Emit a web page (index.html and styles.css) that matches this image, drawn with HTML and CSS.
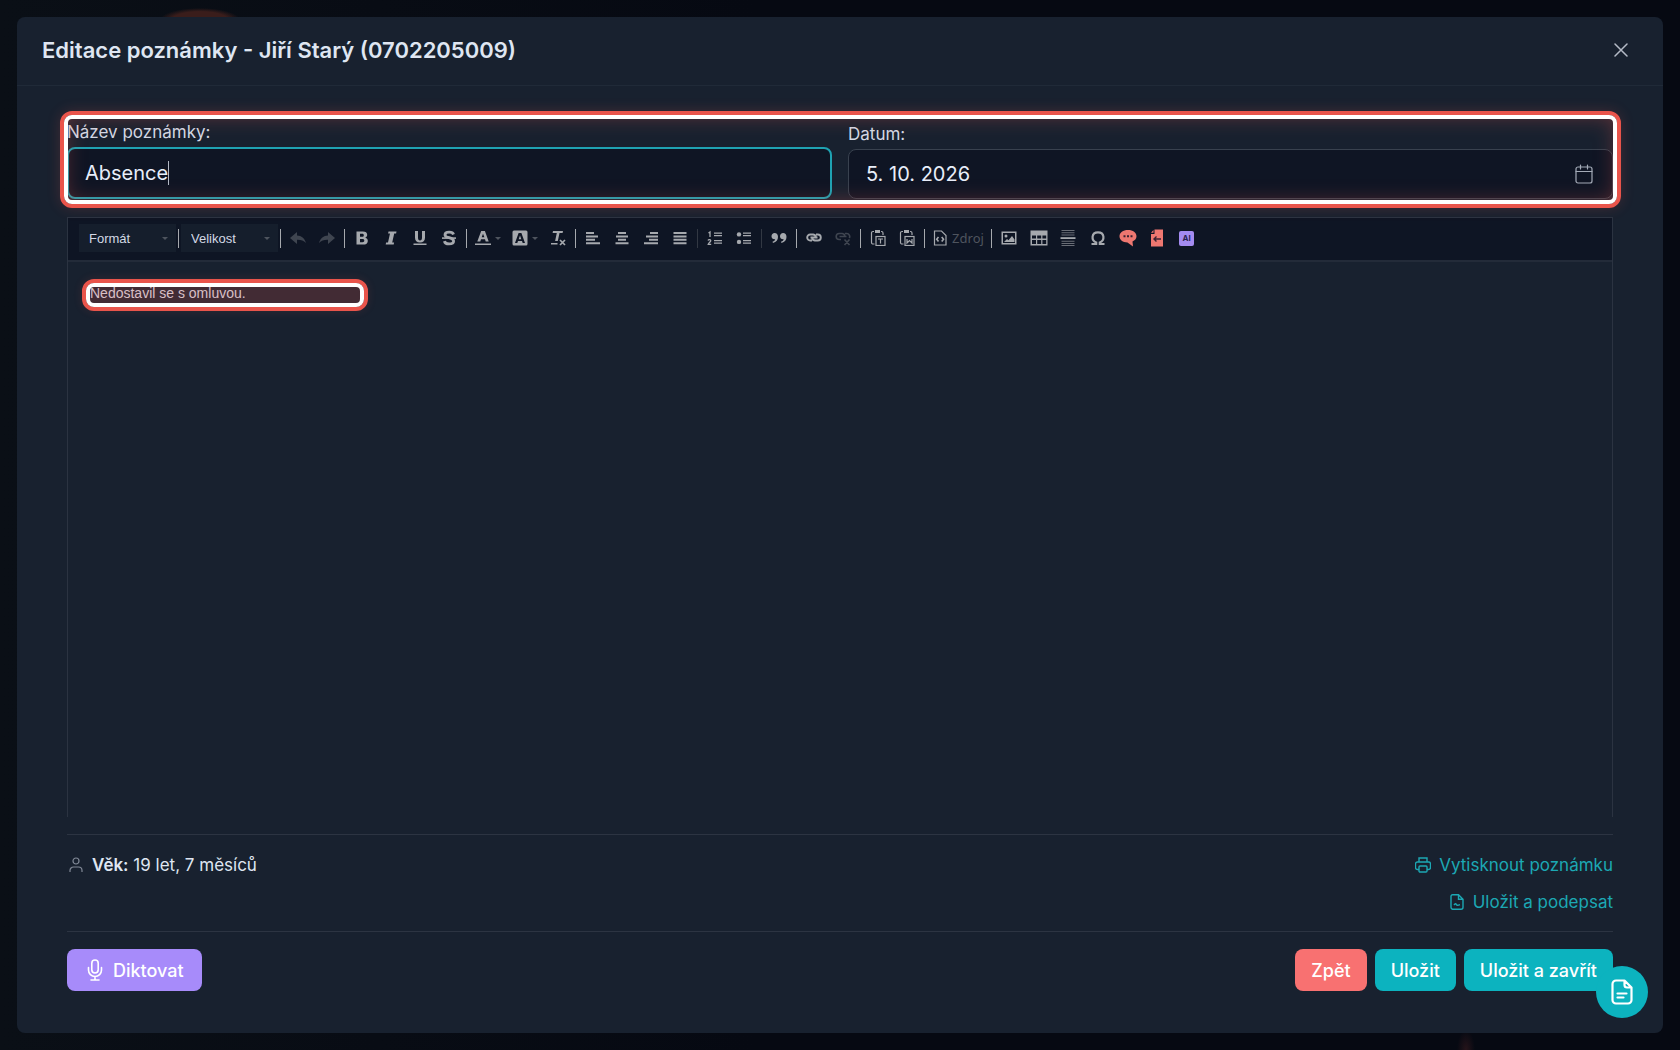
FILE: index.html
```html
<!DOCTYPE html>
<html lang="cs">
<head>
    <meta charset="UTF-8" />
    <meta name="viewport" content="width=device-width, initial-scale=1" />
    <title>Editace poznámky</title>
    <link rel="stylesheet" href="styles.css">
</head>
<body>
    <div class="modal" role="dialog" aria-labelledby="modalTitle">
        <header class="modal-header">
            <h1 id="modalTitle">Editace poznámky - Jiří Starý (0702205009)</h1>
            <button type="button" class="close" aria-label="Zavřít">
                <svg width="14" height="14" viewBox="0 0 14 14"><path d="M1 1l12 12M13 1L1 13" fill="none" stroke="currentColor" stroke-width="1.5" stroke-linecap="round"/></svg>
            </button>
        </header>

        <form class="modal-body" id="noteForm">
            <div class="fields">
                <div class="field">
                    <label for="noteName">Název poznámky:</label>
                    <input type="text" id="noteName" class="focused" value="Absence" />
                    <span class="caret"></span>
                </div>
                <div class="field">
                    <label for="noteDate">Datum:</label>
                    <input type="text" id="noteDate" value="5. 10. 2026" />
                    <button type="button" class="calendar" aria-label="Kalendář">
                        <svg width="18" height="20" viewBox="0 0 18 20" fill="none" stroke="currentColor" stroke-width="1.2" stroke-linecap="round"><rect x="1" y="3" width="16" height="16" rx="2"/><path d="M1 7.5h16M5.5 1v4M12.5 1v4"/></svg>
                    </button>
                </div>
                <div class="highlight highlight-fields"></div>
            </div>

            <div class="editor">
                <div class="toolbar">
                    <div class="combo">
                        <select aria-label="Formát"><option>Formát</option></select>
                        <i class="arrow"></i>
                    </div>
                    <span class="sep"></span>
                    <div class="combo">
                        <select aria-label="Velikost"><option>Velikost</option></select>
                        <i class="arrow"></i>
                    </div>
                    <span class="sep"></span>
                    <div class="group two">
                        <button type="button" class="off" aria-label="Zpět"><svg viewBox="0 0 16 16"><path d="M0 8l7-6v3.500c4.500.2 7.500 2.500 9 7.500-2.500-2.600-5-3.300-9-3.200V14z"/></svg></button>
                        <button type="button" class="off" aria-label="Znovu"><svg viewBox="0 0 16 16"><path d="M16 8L9 2v3.500C4.500 5.700 1.500 8 0 13c2.500-2.600 5-3.300 9-3.200V14z"/></svg></button>
                    </div>
                    <span class="sep"></span>
                    <div class="group four">
                        <button type="button" aria-label="Tučné"><svg viewBox="0 0 16 16"><path fill-rule="evenodd" d="M2.500 1.500h6.300c2.900 0 4.400 1.200 4.400 3.300 0 1.400-.7 2.400-2 2.900 1.700.4 2.600 1.500 2.600 3.200 0 2.400-1.600 3.600-4.800 3.600H2.500zM6 3.800v3h2.100c1.200 0 1.700-.5 1.700-1.500s-.5-1.500-1.700-1.500zM6 9v3.200h2.500c1.200 0 1.800-.5 1.800-1.600S9.700 9 8.500 9z"/></svg></button>
                        <button type="button" aria-label="Kurzíva"><svg viewBox="0 0 16 16"><path d="M5.500 1.500h8l-.4 2h-1.900L9.200 12.500h1.900l-.4 2h-8l.4-2H5l2-9H5.100z"/></svg></button>
                        <button type="button" aria-label="Podtržené"><svg viewBox="0 0 16 16"><path d="M3 1h3v6.500c0 2 .6 2.900 2 2.900s2-.9 2-2.900V1h3v6.700c0 3.100-1.800 4.700-5 4.700S3 10.800 3 7.700zM1.500 13.600h13V15h-13z"/></svg></button>
                        <button type="button" aria-label="Přeškrtnuté"><svg viewBox="0 0 16 16"><path d="M12.500 4.500C12 2.800 10.500 2.200 8.200 2.200c-2.700 0-4.200 1-4.200 2.700C4 8.400 12.600 7 12.600 11c0 1.800-1.600 2.900-4.500 2.900-2.500 0-4.300-.9-4.700-2.800" fill="none" stroke="currentColor" stroke-width="2.800"/><path d="M1 7.300h14v1.600H1z"/></svg></button>
                    </div>
                    <span class="sep"></span>
                    <div class="group colors">
                        <button type="button" class="drop" aria-label="Barva textu"><svg viewBox="0 0 16 16"><path fill-rule="evenodd" d="M6.200 1h3.700l3.800 10.400h-3l-.7-2.200H6l-.7 2.200h-3zM8 3.700L6.700 7.300h2.700zM0 13.400h16V15H0z"/></svg><i class="arrow"></i></button>
                        <button type="button" class="drop" aria-label="Barva pozadí"><svg viewBox="0 0 16 16"><path fill-rule="evenodd" d="M2 .5h12A1.500 1.500 0 0 1 15.500 2v12a1.500 1.500 0 0 1-1.500 1.500H2A1.500 1.500 0 0 1 .5 14V2A1.500 1.500 0 0 1 2 .5zM6.600 3L3 13h2.300l.7-2h4l.7 2H13L9.400 3zM8 5.400l1.300 3.800H6.700z"/></svg><i class="arrow"></i></button>
                        <button type="button" aria-label="Odstranit formátování"><svg viewBox="0 0 16 16"><path d="M3 1h10l-.4 2H9.500L7.800 11H5.100l1.700-8H2.600zM1 13h6.500v1.500H1z"/><path d="M10 10l5 5M15 10l-5 5" fill="none" stroke="currentColor" stroke-width="1.7"/></svg></button>
                    </div>
                    <span class="sep"></span>
                    <div class="group four">
                        <button type="button" aria-label="Vlevo"><svg viewBox="0 0 16 16"><path d="M1 2h8v2H1zM1 5.400h12v2H1zM1 8.800h9v2H1zM1 12.200h14v2H1z"/></svg></button>
                        <button type="button" aria-label="Na střed"><svg viewBox="0 0 16 16"><path d="M4 2h8v2H4zM2 5.400h12v2H2zM4 8.800h8v2H4zM1.500 12.200h13v2h-13z"/></svg></button>
                        <button type="button" aria-label="Vpravo"><svg viewBox="0 0 16 16"><path d="M7 2h8v2H7zM3 5.400h12v2H3zM6 8.800h9v2H6zM1 12.200h14v2H1z"/></svg></button>
                        <button type="button" aria-label="Do bloku"><svg viewBox="0 0 16 16"><path d="M1.500 2h13v2h-13zM1.500 5.400h13v2h-13zM1.500 8.800h13v2h-13zM1.500 12.200h13v2h-13z"/></svg></button>
                    </div>
                    <span class="sep faint"></span>
                    <div class="group two">
                        <button type="button" aria-label="Číslování"><svg viewBox="0 0 16 16"><path d="M7 2.500h8v1.300H7zM7 5h8v1.300H7zM7 10h8v1.300H7zM7 12.500h8v1.300H7z"/><path d="M1.500 3L3 2v5M1 10.500c.5-1.200 3-1 2.700.3C3.500 12 1.500 13 1.200 14.300h3" fill="none" stroke="currentColor" stroke-width="1.300"/></svg></button>
                        <button type="button" aria-label="Odrážky"><svg viewBox="0 0 16 16"><circle cx="3" cy="4.400" r="2.200"/><circle cx="3" cy="11.900" r="2.200"/><path d="M7 2.500h8v1.300H7zM7 5h8v1.300H7zM7 10h8v1.300H7zM7 12.500h8v1.300H7z"/></svg></button>
                    </div>
                    <span class="sep faint"></span>
                    <div class="group one">
                        <button type="button" aria-label="Citace"><svg viewBox="0 0 16 16"><path d="M3.600 3C5.600 3 7 4.500 7 6.800c0 3.200-1.600 5.200-5 6.200l-.5-1.200C3.200 11 4 10.200 4.200 9.200 2 9.500.5 8 .5 6.200.5 4.300 1.800 3 3.600 3zM12.100 3c2 0 3.400 1.500 3.400 3.800 0 3.200-1.600 5.200-5 6.200l-.5-1.200c1.700-.8 2.500-1.600 2.700-2.600C10.500 9.500 9 8 9 6.200 9 4.300 10.300 3 12.100 3z"/></svg></button>
                    </div>
                    <span class="sep"></span>
                    <div class="group two">
                        <button type="button" aria-label="Odkaz"><svg viewBox="0 0 16 16" class="line"><path d="M6 10.500H4.200a3 3 0 0 1 0-6h3a3 3 0 0 1 2.600 3.200M10 4.500h1.800a3 3 0 0 1 0 6h-3a3 3 0 0 1-2.600-3.200M4.500 7.500h7" stroke-width="1.900"/></svg></button>
                        <button type="button" class="off" aria-label="Odstranit odkaz"><svg viewBox="0 0 16 16" class="line"><path d="M6 9.500H4.200a3 3 0 0 1 0-6h3a3 3 0 0 1 2.600 3.200M10 3.500h1.800a3 3 0 0 1 2.500 4.500M4.500 6.500h7M9.500 9.500l5 5.500M14.500 9.500l-5 5.500" stroke-width="1.600"/></svg></button>
                    </div>
                    <span class="sep"></span>
                    <div class="group two">
                        <button type="button" aria-label="Vložit text"><svg viewBox="0 0 16 16" class="line"><path d="M4.500 14H3a1.500 1.500 0 0 1-1.500-1.500V3A1.500 1.500 0 0 1 3 1.500h1M11 1.500h.5A1.500 1.500 0 0 1 13 3v2"/><path d="M5 0h5v3H5z" fill="currentColor" stroke="none"/><rect x="6" y="6.500" width="9" height="9"/><path d="M8 9h5M10.500 9v4.500"/></svg></button>
                        <button type="button" aria-label="Vložit z Wordu"><svg viewBox="0 0 16 16" class="line"><path d="M4.500 14H3a1.500 1.500 0 0 1-1.500-1.500V3A1.500 1.500 0 0 1 3 1.500h1M11 1.500h.5A1.500 1.500 0 0 1 13 3v2"/><path d="M5 0h5v3H5z" fill="currentColor" stroke="none"/><rect x="6" y="6.500" width="9" height="9"/><path d="M8 9v4l2.500-2.500L13 13V9"/></svg></button>
                    </div>
                    <span class="sep"></span>
                    <div class="group source">
                        <button type="button"><svg viewBox="0 0 16 16" class="line"><path d="M3.500 1h6L14 5.500V15H2.500V1z"/><path d="M6.500 7L4.700 9.200l1.800 2.200M9.700 7l1.800 2.200-1.800 2.200" stroke-width="1.600"/></svg><span>Zdroj</span></button>
                    </div>
                    <span class="sep"></span>
                    <div class="group seven">
                        <button type="button" aria-label="Obrázek"><svg viewBox="0 0 16 16"><path fill-rule="evenodd" d="M.5 1.500h15v13H.5zM2 3v10h12V3z"/><circle cx="5" cy="6" r="1.500"/><path d="M3 12l3-3 1.500 1.200L11 6l2.500 3.500V12z"/></svg></button>
                        <button type="button" aria-label="Tabulka"><svg class="wide" viewBox="0 0 18 16"><path fill-rule="evenodd" d="M.5.500h17v15H.5zM2 5.500v3h4v-3zM7.200 5.500v3h4v-3zM12.400 5.500v3h3.800v-3zM2 10v4h4v-4zM7.200 10v4h4v-4zM12.400 10v4h3.800v-4z"/></svg></button>
                        <button type="button" aria-label="Konec stránky"><svg viewBox="0 0 16 16"><path d="M.5 7.200h15v1.800H.5z"/><path d="M1.500 0h13v1h-13zM1.500 2.200h13v1h-13zM1.500 4.400h13v1h-13zM1.500 10.800h13v1h-13zM1.500 13h13v1h-13zM1.500 15h13v1h-13z" opacity=".6"/></svg></button>
                        <button type="button" aria-label="Speciální znak"><svg viewBox="0 0 16 16" class="line"><path d="M1.500 14h4.700v-1.500C1 10.500 1.200 2.300 8 2.300s7 8.200 1.800 10.200V14h4.700" stroke-width="2.200"/></svg></button>
                        <button type="button" class="red" aria-label="Komentář"><svg class="wide" viewBox="0 0 18 18"><path d="M9 1c5 0 8.500 2.700 8.500 6.200 0 2.300-1.700 4.300-4 5.300L14 17.500 8.500 13.400C3.800 13.400.5 10.700.5 7.200S4 1 9 1z"/><path d="M4.500 6.300h2v2h-2zM8 6.300h2v2H8zM11.500 6.300h2v2h-2z" fill="#3b2230"/></svg></button>
                        <button type="button" class="red" aria-label="Vložit dokument"><svg class="wide" viewBox="0 0 18 18"><path d="M6.500.5H15v17H3V5h3.500z"/><path d="M3 3.800L5.500 1v2.800z"/><path d="M6 10h7M8.500 7.500L6 10l2.500 2.500" fill="none" stroke="#3b2230" stroke-width="1.400"/></svg></button>
                        <button type="button" class="ai" aria-label="AI">AI</button>
                    </div>
                </div>
                <div class="content" contenteditable="true" role="textbox" aria-label="Text poznámky">
                    <p>Nedostavil se s omluvou.</p>
                    <div class="highlight highlight-text"></div>
                </div>
            </div>

            <div class="info">
                <p class="age">
                    <svg width="14" height="16" viewBox="0 0 14 16" class="line"><circle cx="7" cy="4" r="3"/><path d="M1 15v-1.500a3.500 3.500 0 0 1 3.500-3.500h5a3.500 3.500 0 0 1 3.500 3.500V15"/></svg>
                    <span><b>Věk:</b> 19 let, 7 měsíců</span>
                </p>
                <div class="links">
                    <a href="#tisk"><svg width="16" height="16" viewBox="0 0 16 16" class="line"><path d="M4 5V1h8v4M4 12.500H2.500a2 2 0 0 1-2-2V7a2 2 0 0 1 2-2h11a2 2 0 0 1 2 2v3.500a2 2 0 0 1-2 2H12" stroke-width="1.400"/><rect x="4" y="9" width="8" height="6" rx="1" stroke-width="1.400"/></svg>Vytisknout poznámku</a>
                    <a href="#podpis"><svg width="16" height="16" viewBox="0 0 16 16" class="line"><path d="M3.500.7h6l4.500 4.500v8a2 2 0 0 1-2 2H3.500a2 2 0 0 1-1.500-2v-11a1.500 1.500 0 0 1 1.500-1.500zM9.500.7v4.500H14M5 11c1.500-2.200 2-1 2.500-.2s1.500.7 3.500-.2" stroke-width="1.400"/></svg>Uložit a podepsat</a>
                </div>
            </div>

            <div class="actions">
                <button type="button" class="btn purple"><svg width="16" height="22" viewBox="0 0 16 22" fill="none" stroke="currentColor" stroke-width="1.600" stroke-linecap="round"><rect x="4.800" y="1" width="6.400" height="13" rx="3.200"/><path d="M1.500 8.500V11a6.500 6.500 0 0 0 13 0V8.500M8 17.500V21M4 21h8"/></svg>Diktovat</button>
                <div class="right">
                    <button type="button" class="btn coral">Zpět</button>
                    <button type="submit" class="btn teal">Uložit</button>
                    <button type="submit" class="btn teal">Uložit a zavřít</button>
                </div>
            </div>
        </form>
    </div>

    <button type="button" class="fab" aria-label="Poznámky">
        <svg width="22" height="26" viewBox="0 0 22 26" fill="none" stroke="currentColor" stroke-width="2.200" stroke-linecap="round" stroke-linejoin="round"><path d="M5 1.500h8.500l7 7V21a3.500 3.500 0 0 1-3.500 3.500H5A3.500 3.500 0 0 1 1.500 21V5A3.500 3.500 0 0 1 5 1.500zM13.500 1.500V6A2.500 2.500 0 0 0 16 8.500h4.500M6.500 14.500h9M6.500 18.500h6"/></svg>
    </button>
</body>
</html>
```
FILE: styles.css
```css
* {
    box-sizing: border-box;
}
body {
    margin: 0;
    height: 100vh;
    padding: 17px;
    font-family: Inter, sans-serif;
    font-size: 17px;
    color: #dfe6f2;
    background:
        radial-gradient(ellipse 40px 12px at 200px 20px, #3a1d1b 70%, transparent),
        radial-gradient(ellipse 9px 20px at 1466px 100%, #26141a, transparent),
        linear-gradient(90deg, #0a0f16, #060912 45%, #060912);
}
h1, p {
    margin: 0;
}
button {
    padding: 0;
    border: none;
    background: none;
    color: inherit;
    font-family: inherit;
    cursor: pointer;
}
.line {
    fill: none;
    stroke: currentColor;
    stroke-width: 1.2;
}
.modal {
    display: flex;
    flex-direction: column;
    height: 100%;
    border-radius: 8px;
    background: #18212f;
}
.modal-header {
    display: flex;
    align-items: center;
    justify-content: space-between;
    height: 69px;
    padding: 0 35px 2px 25px;
    border-bottom: 1px solid #202a38;
}
.modal-header h1 {
    font-size: 22px;
    line-height: 32px;
    font-weight: 600;
}
.close {
    display: flex;
    color: #b4bac6;
}
.modal-body {
    flex: 1;
    display: flex;
    flex-direction: column;
    padding: 34px 50px 42px;
}

/* name + date */
.fields {
    position: relative;
    display: flex;
    align-items: flex-end;
    gap: 16px;
}
.field {
    position: relative;
    flex: 1;
}
.field label {
    display: block;
    line-height: 24px;
    padding-bottom: 3px;
    color: #d3d9e5;
}
.field input {
    display: block;
    width: 100%;
    height: 50px;
    padding: 0 17px;
    border: 1px solid #39424f;
    border-radius: 8px;
    outline: none;
    background: #0f1524;
    color: #e8eefa;
    font-family: inherit;
    font-size: 20px;
}
.field input.focused {
    height: 52px;
    padding: 0 16px;
    border: 2px solid #1fa3b3;
}
.caret {
    position: absolute;
    left: 101px;
    bottom: 14px;
    width: 1px;
    height: 24px;
    background: #b4bac6;
}
.calendar {
    position: absolute;
    right: 20px;
    bottom: 15px;
    display: flex;
    color: #a4abb8;
}
.highlight {
    position: absolute;
    border: 4px solid #e9544b;
    border-radius: 12px;
    pointer-events: none;
}
.highlight::before {
    content: "";
    position: absolute;
    inset: 0;
    border: 4px solid #fff;
    border-radius: 8px;
}
.highlight-fields {
    inset: -9px -8px -9px -7px;
    box-shadow: 0 0 14px #e9544b33, inset 0 0 22px #e9544b66;
}
.highlight-text {
    left: 14px;
    top: 17px;
    width: 286px;
    height: 32px;
    background: #e9544b33;
    box-shadow: 0 0 10px #e9544b22;
}

/* editor */
.editor {
    flex: 1;
    display: flex;
    flex-direction: column;
    margin-top: 18px;
    border: 1px solid #2b3341;
    border-bottom: none;
}
.toolbar {
    display: flex;
    align-items: center;
    height: 44px;
    padding: 0 10px 2px 11px;
    border-bottom: 2px solid #232b39;
    background: #0e1524;
    color: #a6a9ae;
}
.combo {
    position: relative;
    width: 97px;
    background: #151e2c;
}
.combo select {
    display: block;
    width: 100%;
    height: 28px;
    padding: 0 10px;
    border: none;
    appearance: none;
    background: none;
    color: #d3d9e5;
    font: 13px "Liberation Sans", Arial, sans-serif;
}
.arrow {
    border: 3px solid transparent;
    border-top-color: #4e545e;
    border-bottom: none;
}
.combo .arrow {
    position: absolute;
    right: 8px;
    top: 13px;
}
.sep {
    width: 1px;
    height: 19px;
    margin: 0 2px;
    background: #a6a9ae;
}
.sep.faint {
    background: #323843;
}
.group {
    display: flex;
}
.group button {
    flex: 1;
    display: flex;
    align-items: center;
    justify-content: center;
    height: 28px;
}
.group svg {
    flex: none;
    width: 16px;
    height: 16px;
    fill: currentColor;
}
.group svg.line {
    fill: none;
}
.group svg.wide {
    width: 18px;
    height: 18px;
}
.group.one {
    width: 30px;
}
.group.two {
    width: 59px;
}
.group.four {
    width: 117px;
}
.group.seven {
    width: 207px;
}
.group.colors {
    width: 104px;
}
.group .drop {
    flex: none;
    width: 37px;
    gap: 4px;
}
.group.source {
    width: 62px;
}
.group.source button {
    gap: 4px;
    font-family: "Noto Sans", sans-serif;
    font-size: 13px;
}
.group.source span {
    color: #4e545e;
}
.group .off {
    color: #3f4550;
}
.group .red {
    color: #ee7770;
}
.group .ai {
    flex: none;
    align-self: center;
    width: 15px;
    height: 15px;
    margin: 0 7px;
    border-radius: 2px;
    background: #a48bf0;
    color: #2b2350;
    font-size: 8px;
    font-weight: 700;
}
.content {
    position: relative;
    flex: 1;
    padding: 21px 22px;
    outline: none;
    color: #d5dae3;
    font: 14px/20px "Liberation Sans", Arial, sans-serif;
}

/* footer */
.info {
    display: flex;
    justify-content: space-between;
    margin-top: 17px;
    padding: 11px 0;
    border-top: 1px solid #2c3442;
    border-bottom: 1px solid #2c3442;
}
.info p,
.info a {
    display: flex;
    align-items: center;
    gap: 8px;
    height: 37px;
}
.age {
    padding-left: 2px;
}
.age svg {
    margin-right: 1px;
    color: #808896;
}
.age b {
    font-weight: 600;
}
.links {
    display: flex;
    flex-direction: column;
    align-items: flex-end;
}
.links a {
    color: #1ca8b4;
    text-decoration: none;
}
.actions {
    display: flex;
    justify-content: space-between;
    margin-top: 17px;
}
.right {
    display: flex;
    gap: 8px;
}
.btn {
    display: flex;
    align-items: center;
    gap: 10px;
    height: 42px;
    padding: 0 16px;
    border-radius: 8px;
    color: #fff;
    font-size: 18px;
    font-weight: 500;
}
.purple {
    padding: 0 18px 0 20px;
    background: #a78bfa;
}
.coral {
    background: #f87171;
}
.teal {
    background: #0cb3bf;
}
.fab {
    position: fixed;
    right: 32px;
    bottom: 32px;
    display: flex;
    align-items: center;
    justify-content: center;
    width: 52px;
    height: 52px;
    border-radius: 50%;
    background: #0cb3bf;
    color: #fff;
}
```
